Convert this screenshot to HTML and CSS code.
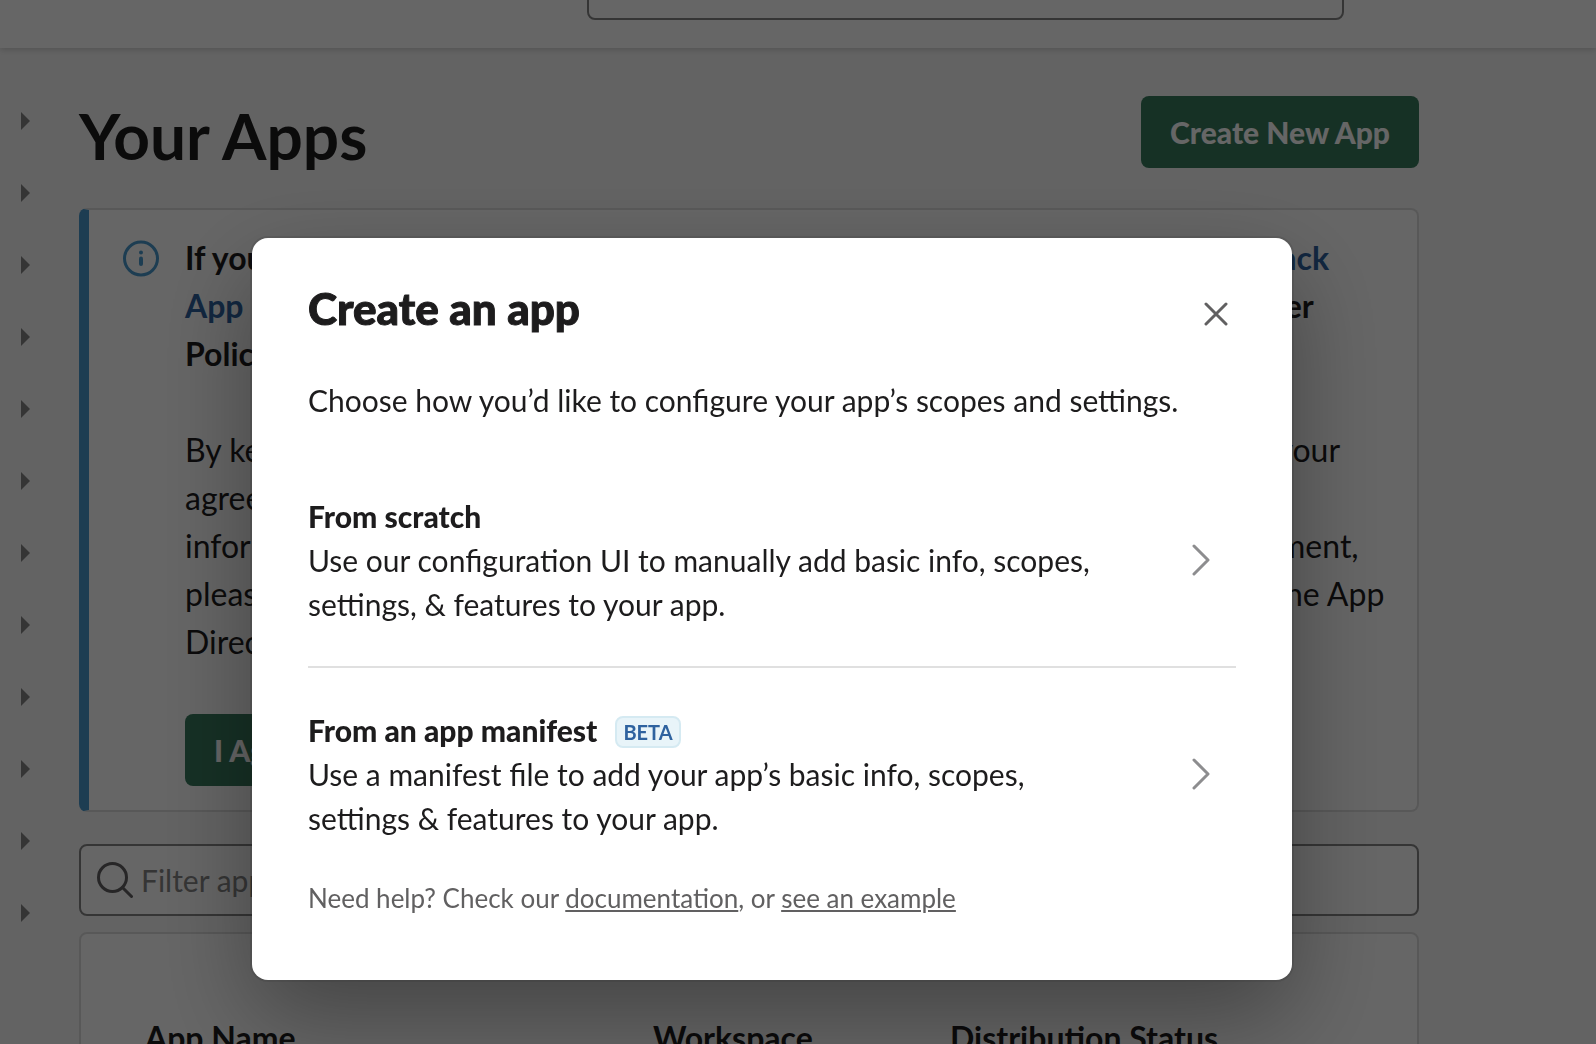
FILE: index.html
```html
<!DOCTYPE html>
<html lang="en">
<head>
<meta charset="utf-8">
<title>Your Apps</title>
<meta name="viewport" content="width=device-width, initial-scale=1">
<link rel="stylesheet" href="styles.css">
</head>
<body class="modal-open">
<header class="topbar">
  <input class="field topbar-search" type="search" aria-label="Search">
</header>
<div class="layout">
  <nav class="sidebar" aria-label="Sections">
    <button class="toggle" aria-label="Expand section 1"><span class="arrow"></span></button>
    <button class="toggle" aria-label="Expand section 2"><span class="arrow"></span></button>
    <button class="toggle" aria-label="Expand section 3"><span class="arrow"></span></button>
    <button class="toggle" aria-label="Expand section 4"><span class="arrow"></span></button>
    <button class="toggle" aria-label="Expand section 5"><span class="arrow"></span></button>
    <button class="toggle" aria-label="Expand section 6"><span class="arrow"></span></button>
    <button class="toggle" aria-label="Expand section 7"><span class="arrow"></span></button>
    <button class="toggle" aria-label="Expand section 8"><span class="arrow"></span></button>
    <button class="toggle" aria-label="Expand section 9"><span class="arrow"></span></button>
    <button class="toggle" aria-label="Expand section 10"><span class="arrow"></span></button>
    <button class="toggle" aria-label="Expand section 11"><span class="arrow"></span></button>
    <button class="toggle" aria-label="Expand section 12"><span class="arrow"></span></button>
  </nav>
  <main class="content">
    <div class="page-head">
      <h1 class="page-title">Your Apps</h1>
      <button class="btn">Create New App</button>
    </div>
    <section class="notice">
      <svg class="notice-icon" viewBox="0 0 38 38" aria-hidden="true">
        <circle cx="20" cy="19.5" r="16.5" fill="none" stroke="currentColor" stroke-width="3"/>
        <circle cx="20" cy="13.5" r="2" fill="currentColor"/>
        <path d="M20 19.5v5.5" fill="none" stroke="currentColor" stroke-width="4" stroke-linecap="round"/>
      </svg>
      <div class="notice-body">
        <p class="notice-text notice-strong">If you are planning to submit your app to the App Directory, please visit the <a class="link" href="#">Slack<br>App Developer Policy</a> before you submit, and check that it meets the Developer<br>Policy.</p>
        <p class="notice-text">By keeping your app in the Slack App Directory, you confirm that you approve your<br>agreement with Slack and its updated terms. If you would like more<br>information about the policy, or ask any questions about the terms of an agreement,<br>please contact us. If you do not agree to these terms, you may remove it from the App<br>Directory.</p>
        <button class="btn">I Agree</button>
      </div>
    </section>
    <div class="field filter">
      <svg class="filter-icon" viewBox="0 0 36 36" aria-hidden="true">
        <circle cx="15.5" cy="15.5" r="14" fill="none" stroke="currentColor" stroke-width="3"/>
        <path d="M25.5 25.5l9 9" fill="none" stroke="currentColor" stroke-width="3" stroke-linecap="round"/>
      </svg>
      <input class="filter-input" type="text" aria-label="Filter apps" placeholder="Filter apps by name">
    </div>
    <section class="apps">
      <table class="apps-table">
        <thead>
          <tr><th class="col-name">App Name</th><th class="col-workspace">Workspace</th><th>Distribution Status</th></tr>
        </thead>
      </table>
    </section>
  </main>
</div>
<div class="overlay">
  <div class="modal" role="dialog" aria-modal="true" aria-labelledby="modal-title">
    <div class="modal-head">
      <h2 class="modal-title" id="modal-title">Create an app</h2>
      <button class="close" aria-label="Close">
        <svg class="close-icon" viewBox="0 0 24 24" aria-hidden="true"><path d="M2 2l20 20M22 2L2 22" fill="none" stroke="currentColor" stroke-width="3" stroke-linecap="round"/></svg>
      </button>
    </div>
    <p class="modal-lead">Choose how you’d like to configure your app’s scopes and settings.</p>
    <button class="option">
      <span class="option-text">
        <span class="option-title">From scratch</span>
        <span class="option-desc">Use our configuration UI to manually add basic info, scopes, settings, &amp; features to your app.</span>
      </span>
      <svg class="chevron" viewBox="0 0 20 32" aria-hidden="true"><path d="M3 2l14 14L3 30" fill="none" stroke="currentColor" stroke-width="3" stroke-linecap="round" stroke-linejoin="round"/></svg>
    </button>
    <button class="option">
      <span class="option-text">
        <span class="option-title">From an app manifest <span class="badge">BETA</span></span>
        <span class="option-desc">Use a manifest file to add your app’s basic info, scopes, settings &amp; features to your app.</span>
      </span>
      <svg class="chevron" viewBox="0 0 20 32" aria-hidden="true"><path d="M3 2l14 14L3 30" fill="none" stroke="currentColor" stroke-width="3" stroke-linecap="round" stroke-linejoin="round"/></svg>
    </button>
    <p class="help">Need help? Check our <a class="help-link" href="#">documentation</a>, or <a class="help-link" href="#">see an example</a></p>
  </div>
</div>
</body>
</html>
```

FILE: styles.css
```css
* { box-sizing: border-box; }

body {
  margin: 0;
  background: #f8f8f8;
  color: #1d1c1d;
  font-family: Lato, "Noto Sans", sans-serif;
  font-size: 30px;
  line-height: 44px;
}

.modal-open { height: 100vh; overflow: hidden; }

h1, h2, p { margin: 0; }

button, input { font: inherit; color: inherit; }

button {
  border: 0;
  padding: 0;
  background: none;
  text-align: left;
  cursor: pointer;
}

/* Shared controls */
.btn {
  height: 72px;
  padding: 0 29px;
  border-radius: 8px;
  background: #387a5e;
  color: #fff;
  font-weight: 900;
  white-space: nowrap;
}

.field {
  height: 72px;
  border: 2px solid #868686;
  border-radius: 8px;
  background: #fff;
}

/* Top bar, scrolled so that only the foot of the search box shows */
.topbar {
  position: relative;
  display: flex;
  align-items: flex-end;
  height: 48px;
  padding: 0 252px 28px 587px;
  background: #fff;
  box-shadow: 0 2px 6px rgba(0, 0, 0, 0.16);
}

.topbar-search { flex: 1; min-width: 0; }

.layout { display: flex; padding-right: 177px; }

.sidebar {
  display: flex;
  flex-direction: column;
  flex: none;
  width: 79px;
  padding-top: 37px;
}

.toggle { height: 72px; padding-left: 21px; }

.arrow {
  display: block;
  width: 0;
  border-left: 9px solid #868686;
  border-top: 9px solid transparent;
  border-bottom: 9px solid transparent;
}

.content { flex: 1; min-width: 0; padding-top: 48px; }

.page-head {
  display: flex;
  justify-content: space-between;
  align-items: flex-start;
  margin-bottom: 32px;
}

.page-title { font-size: 64px; line-height: 80px; font-weight: 700; }

/* Policy notice */
.notice {
  display: flex;
  gap: 26px;
  padding: 24px 24px 24px 32px;
  border: 2px solid #ddd;
  border-left: 10px solid #4a99cd;
  border-radius: 8px;
  background: #fff;
  margin-bottom: 32px;
}

.notice-icon { flex: none; width: 38px; height: 38px; margin-top: 5px; color: #4a99cd; }

.notice-text { font-size: 32px; line-height: 48px; margin-bottom: 48px; white-space: nowrap; }

.notice-strong { font-weight: 700; }

.link { color: #2e629f; text-decoration: none; }

/* Filter and table */
.filter {
  display: flex;
  align-items: center;
  gap: 8px;
  padding: 0 16px;
  margin-bottom: 16px;
}

.filter-icon { flex: none; width: 36px; height: 36px; color: #616061; }

.filter-input {
  flex: 1;
  min-width: 0;
  border: 0;
  padding: 0;
  background: none;
}

.filter-input::placeholder { color: #868686; opacity: 1; }

.apps {
  padding: 80px 64px;
  border: 2px solid #ddd;
  border-radius: 8px;
  background: #fff;
}

.apps-table { width: 100%; table-layout: fixed; border-collapse: collapse; }

.apps-table th {
  padding: 0;
  font-size: 32px;
  line-height: 48px;
  font-weight: 700;
  text-align: left;
}

.col-name { width: 508px; }
.col-workspace { width: 297px; }

/* Modal */
.overlay {
  position: fixed;
  inset: 0;
  display: flex;
  justify-content: center;
  align-items: flex-start;
  padding: 238px 52px 0 0;
  background: rgba(0, 0, 0, 0.6);
}

.modal {
  width: 1040px;
  max-width: 100%;
  padding: 40px 56px 62px;
  border-radius: 16px;
  background: #fff;
  box-shadow: 0 0 0 2px rgba(29, 28, 29, 0.13), 0 36px 96px rgba(0, 0, 0, 0.35);
}

.modal-head {
  display: flex;
  justify-content: space-between;
  align-items: flex-start;
  height: 60px;
  margin-bottom: 40px;
}

.modal-title {
  font-size: 44px;
  line-height: 60px;
  font-weight: 900;
  -webkit-text-stroke: 1px currentColor;
}

.close { margin-top: 16px; padding: 8px; color: #616061; }

.close-icon { display: block; width: 24px; height: 24px; }

.modal-lead { margin-bottom: 32px; }

.option {
  display: flex;
  align-items: center;
  justify-content: space-between;
  width: 100%;
  padding: 40px 25px 40px 0;
}

.option + .option { border-top: 2px solid #e0e0e0; padding-bottom: 38px; }

.option-text { max-width: 800px; }

.option-title { display: flex; align-items: center; gap: 18px; font-weight: 900; }

.option-desc { display: block; }

.badge {
  height: 32px;
  margin-top: 4px;
  padding: 0 6px;
  border: 2px solid #d5eaf2;
  border-radius: 8px;
  background: #e8f4f9;
  color: #2e629f;
  font-size: 20px;
  line-height: 28px;
  font-weight: 700;
}

.chevron { flex: none; width: 20px; height: 32px; color: #8d8d8f; }

.help { font-size: 26px; line-height: 40px; color: #616061; }

.help-link { color: inherit; }
```
